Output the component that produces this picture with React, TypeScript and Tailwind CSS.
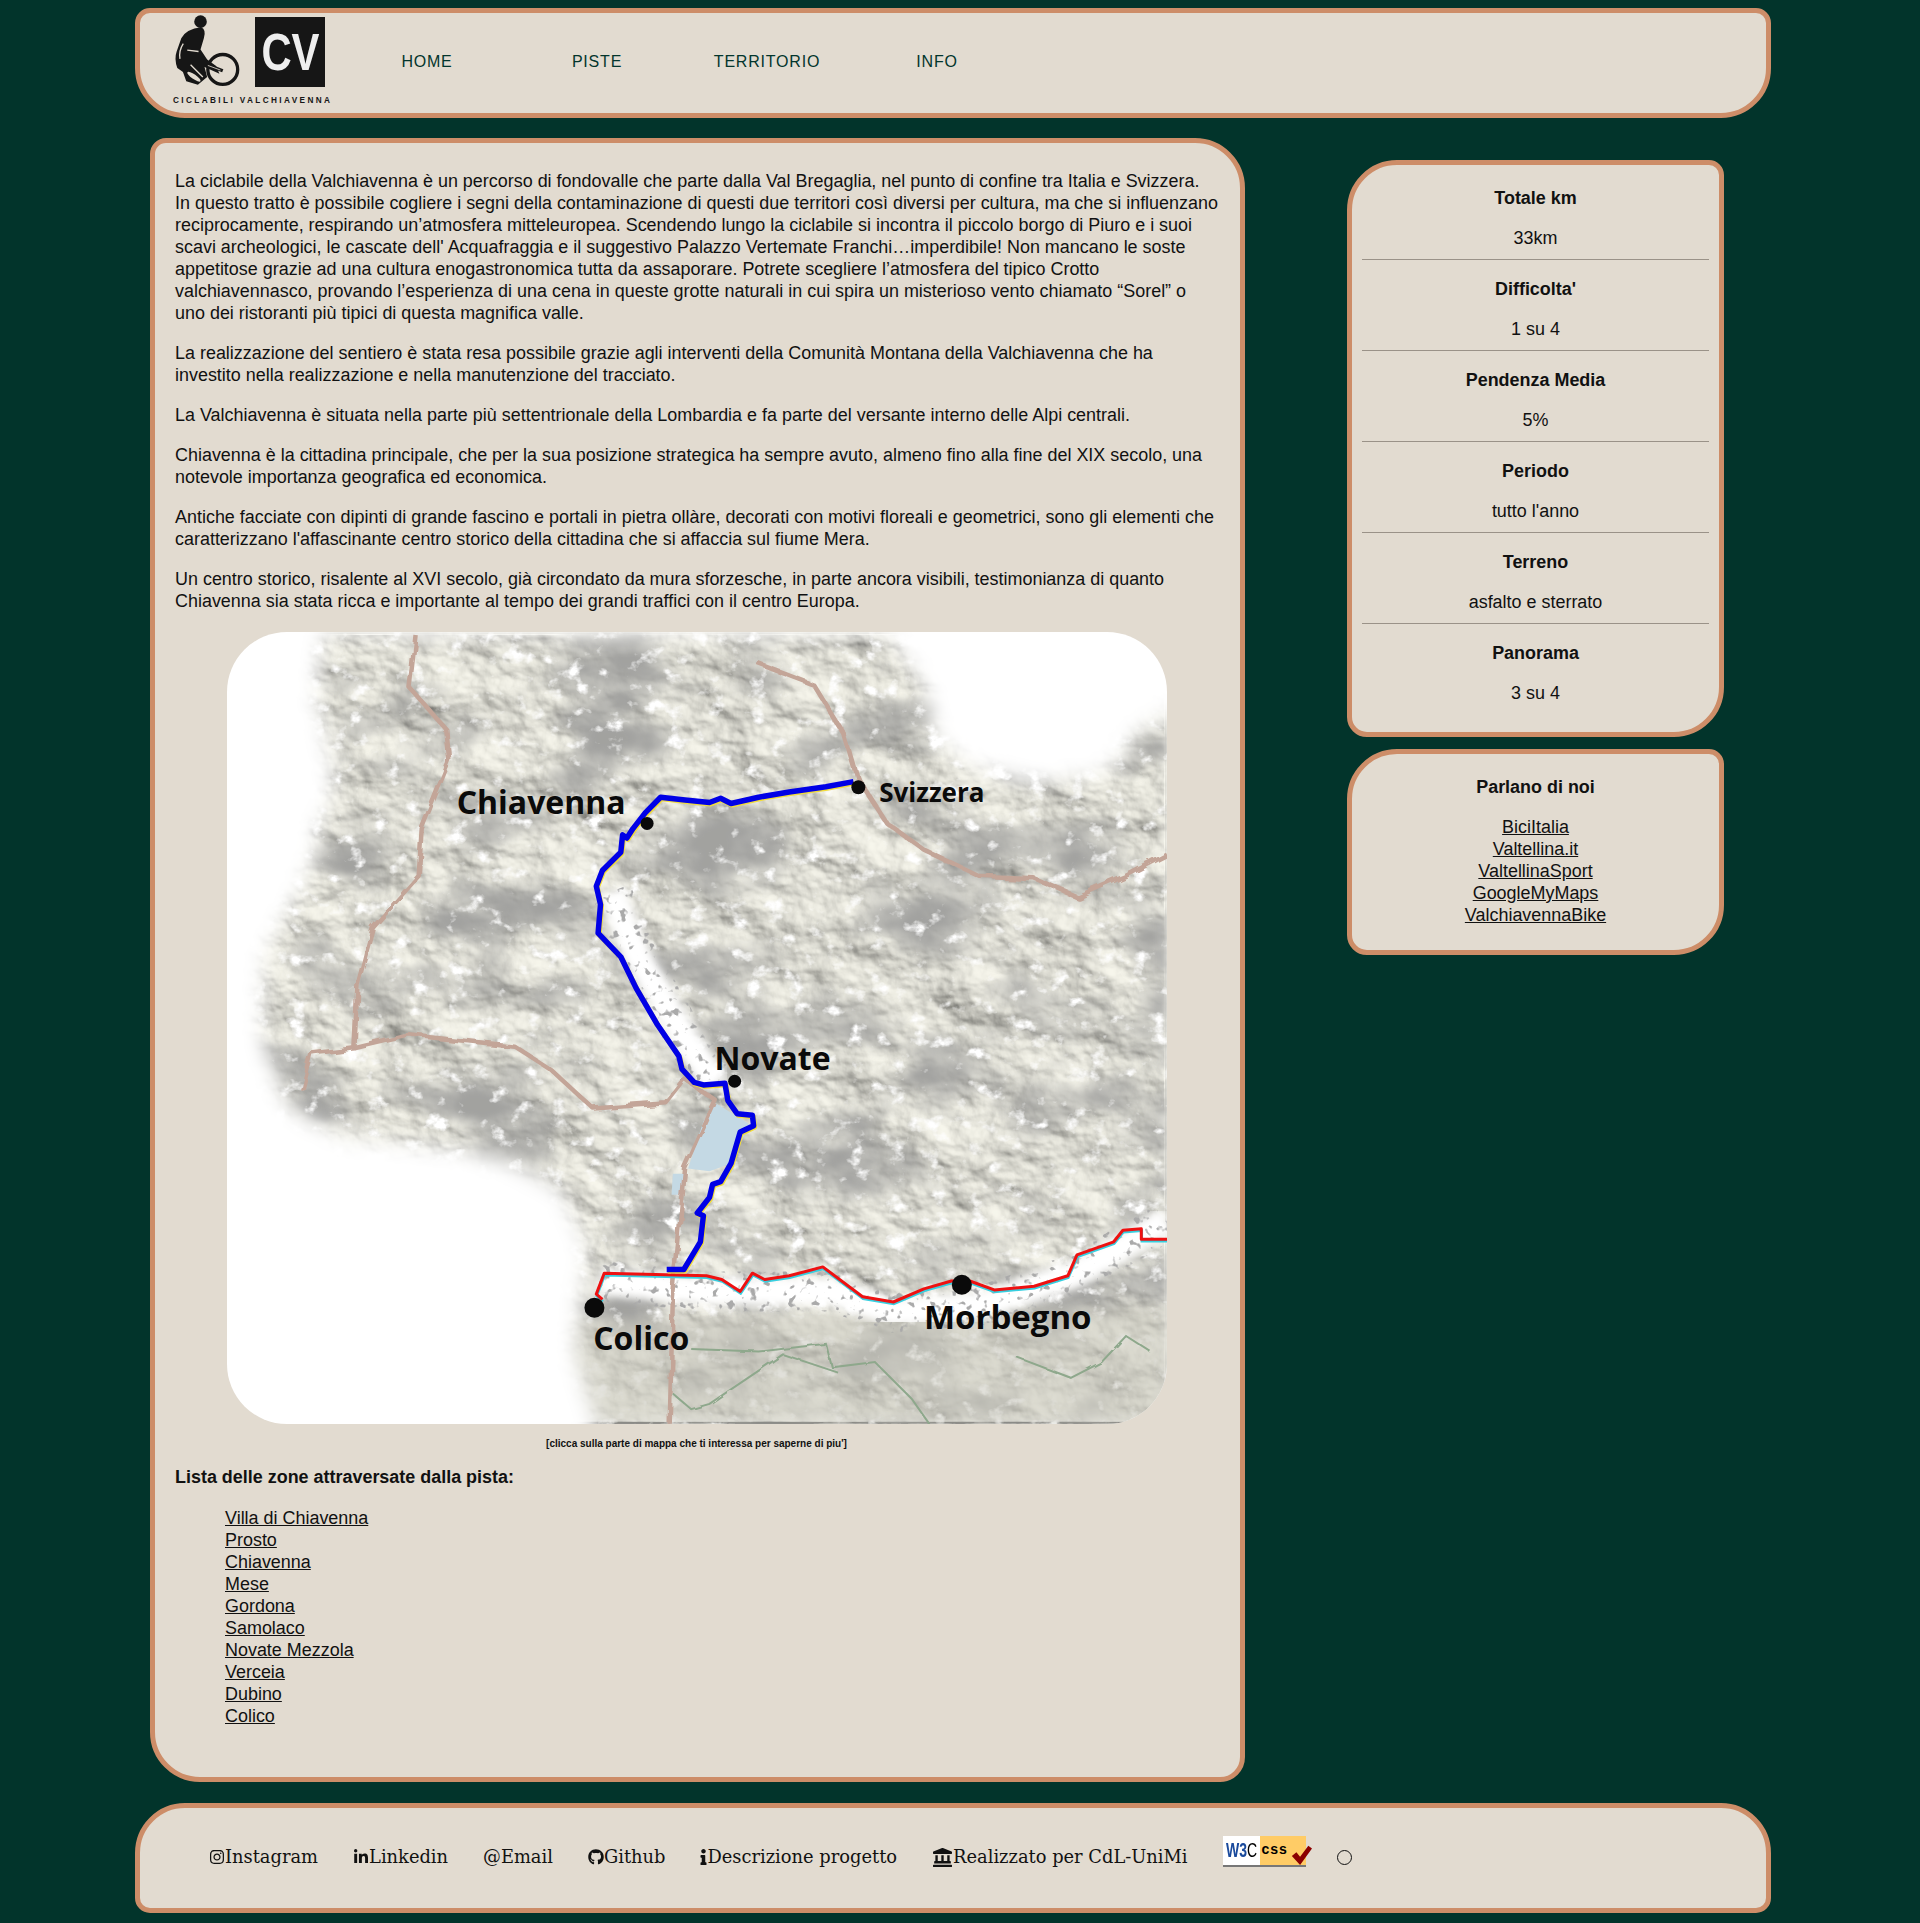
import type { ComponentProps } from "react";
import {
  FaGithub,
  FaInfo,
  FaInstagram,
  FaLandmark,
  FaLinkedinIn,
} from "react-icons/fa";

const sans = "font-['Liberation_Sans',Arial,sans-serif]";

const NAV = ["HOME", "PISTE", "TERRITORIO", "INFO"];

const ZONES = [
  "Villa di Chiavenna",
  "Prosto",
  "Chiavenna",
  "Mese",
  "Gordona",
  "Samolaco",
  "Novate Mezzola",
  "Verceia",
  "Dubino",
  "Colico",
];

const FACTS = [
  ["Totale km", "33km"],
  ["Difficolta'", "1 su 4"],
  ["Pendenza Media", "5%"],
  ["Periodo", "tutto l'anno"],
  ["Terreno", "asfalto e sterrato"],
  ["Panorama", "3 su 4"],
];

const PRESS = ["BiciItalia", "Valtellina.it", "ValtellinaSport", "GoogleMyMaps", "ValchiavennaBike"];

// the map points were read off a zoomed crop, this brings them back to pixels
const px = (x: number) => (x - 12) / 1.633;
const py = (y: number) => (y - 25) / 1.912;
const line = (pts: number[][]) => pts.map(([x, y]) => `${px(x).toFixed(1)},${py(y).toFixed(1)}`).join(" ");

const TERRAIN = [
  [170, 30], [1090, 30], [1150, 130], [1170, 230], [1230, 285], [1330, 315], [1450, 295], [1500, 215], [1560, 170],
  [1560, 1550], [620, 1550], [580, 1400], [600, 1200], [560, 1090], [480, 1040], [380, 1010], [200, 990], [110, 930],
  [70, 800], [75, 640], [140, 500], [190, 300], [160, 150],
];

const VALLEY = [
  [[640, 520], [680, 640], [760, 800], [810, 890]],
  [[620, 1265], [800, 1285], [1000, 1285], [1100, 1325], [1250, 1310], [1400, 1250], [1547, 1150]],
];

const ROADS = [
  [[320, 30], [310, 130], [370, 210], [375, 270], [330, 400], [325, 490], [250, 590], [225, 700], [220, 820], [150, 830], [135, 900]],
  [[220, 820], [310, 795], [480, 815], [540, 860], [610, 935], [730, 925], [760, 880], [810, 920], [760, 1050], [740, 1300], [735, 1538]],
  [[880, 85], [970, 125], [1020, 220], [1040, 300], [1090, 390], [1150, 440], [1240, 490], [1330, 495], [1400, 530], [1480, 490], [1547, 450]],
];

const CONTOURS = [
  [[770, 1395], [880, 1400], [990, 1385], [1000, 1430], [1070, 1420], [1130, 1490], [1160, 1540]],
  [[1010, 1440], [920, 1405], [800, 1500], [770, 1510], [740, 1480]],
  [[1300, 1410], [1390, 1450], [1440, 1420], [1480, 1370], [1520, 1400]],
];

const BLUE = [
  [1035, 310], [990, 320], [930, 330], [880, 340], [835, 352], [818, 342], [800, 350], [760, 345], [720, 340], [695, 370],
  [675, 400], [665, 418], [658, 412], [655, 445], [625, 480], [615, 510], [622, 545], [618, 600], [655, 645], [680, 705],
  [715, 775], [750, 835], [755, 860], [775, 885], [790, 890], [825, 887], [830, 920], [845, 945], [870, 948], [872, 968],
  [850, 980], [835, 1040], [818, 1075], [805, 1080], [800, 1105], [780, 1135], [790, 1140], [785, 1190], [758, 1243], [730, 1243],
];

const RED = [
  [625, 1300], [615, 1290], [628, 1250], [795, 1255], [820, 1262], [850, 1285], [870, 1250], [890, 1262], [930, 1255],
  [985, 1238], [1050, 1295], [1100, 1305], [1150, 1280], [1195, 1265], [1225, 1265], [1265, 1282], [1330, 1275],
  [1385, 1255], [1400, 1215], [1460, 1190], [1475, 1168], [1505, 1165], [1505, 1185], [1547, 1185],
];

const CITIES: [string, number, number, number][] = [
  ["Chiavenna", 387, 372, 32],
  ["Svizzera", 1077, 350, 26],
  ["Novate", 808, 862, 32],
  ["Colico", 610, 1396, 32],
  ["Morbegno", 1150, 1356, 33],
];

const DOTS = [
  [1043, 321, 7],
  [698, 390, 6.5],
  [841, 883, 6.5],
  [612, 1316, 10],
  [1212, 1272, 10],
];

const Panel = ({ className, ...props }: ComponentProps<"div">) => {
  return <div className={`border-[5px] border-[#cd8d68] bg-[#e2dbd0] ${className}`} {...props} />;
};

const Cyclist = () => {
  return (
    <svg viewBox="75 15 205 220" className="h-[73px] w-[68px] shrink-0">
      <circle cx="158" cy="38" r="19" fill="#161616" />
      <path
        d="M100 88 Q115 60 160 55 Q176 62 168 88 L158 122 L178 152 L205 172 L215 195 L170 175 L178 205 L150 228 L115 218 L105 190 L88 178 Q78 150 86 128 Z"
        fill="#161616"
      />
      <path d="M106 104 Q92 125 96 150 M118 124 L152 128 M128 168 L165 205" stroke="#e2dbd0" strokeWidth="4" fill="none" />
      <circle cx="225" cy="182" r="45" fill="none" stroke="#161616" strokeWidth="10" />
      <path d="M178 168 L225 186" stroke="#161616" strokeWidth="10" />
      <path d="M180 170 L218 184" stroke="#e2dbd0" strokeWidth="2.5" />
      <ellipse cx="138" cy="204" rx="24" ry="7" transform="rotate(35 138 204)" fill="#e2dbd0" />
    </svg>
  );
};

const Logo = () => {
  return (
    <div className="ml-[33px] mt-[1px] w-[169px] shrink-0">
      <div className="flex items-start">
        <Cyclist />
        <div className="ml-[14px] mt-[3px] flex h-[70px] w-[70px] items-center justify-center overflow-hidden bg-[#161616] text-[51px] leading-none font-bold text-[#eeeeee]">
          <span className="scale-x-[0.82]">CV</span>
        </div>
      </div>
      <div className="mt-[9px] text-[8.2px] leading-[10px] font-bold tracking-[2.4px] whitespace-nowrap text-[#161616]">
        CICLABILI VALCHIAVENNA
      </div>
    </div>
  );
};

const Header = () => {
  return (
    <Panel className="flex h-[110px] rounded-[15px_15px_50px_50px]">
      <Logo />
      <nav className="mt-[39px] flex">
        {NAV.map((item) => (
          <a key={item} className="block w-[170px] text-center text-[16px] leading-[20px] tracking-[0.8px] text-[#02352c]">
            {item}
          </a>
        ))}
      </nav>
    </Panel>
  );
};

const ValchiavennaMap = () => {
  return (
    <svg viewBox="0 0 940 791" className="ml-[52px] block h-[792px] w-[940px] rounded-[60px] bg-white">
      <defs>
        <filter id="relief" x="0" y="0" width="100%" height="100%">
          <feTurbulence type="fractalNoise" baseFrequency="0.012 0.018" numOctaves="6" seed="11" result="noise" />
          <feGaussianBlur in="noise" stdDeviation="1" result="smooth" />
          <feDiffuseLighting in="smooth" surfaceScale="13" diffuseConstant="1.08" lightingColor="#efeee4">
            <feDistantLight azimuth="315" elevation="52" />
          </feDiffuseLighting>
        </filter>
        <filter id="dark" x="0" y="0" width="100%" height="100%">
          <feTurbulence type="fractalNoise" baseFrequency="0.009 0.016" numOctaves="5" seed="4" />
          <feColorMatrix values="0 0 0 0 0.36  0 0 0 0 0.36  0 0 0 0 0.35  3.2 0 0 0 -1.5" />
          <feGaussianBlur stdDeviation="2.5" />
        </filter>
        <filter id="light" x="0" y="0" width="100%" height="100%">
          <feTurbulence type="fractalNoise" baseFrequency="0.05 0.06" numOctaves="4" seed="19" />
          <feColorMatrix values="0 0 0 0 1  0 0 0 0 1  0 0 0 0 1  5 0 0 0 -3" />
          <feGaussianBlur stdDeviation="0.6" />
        </filter>
        <filter id="specks" x="0" y="0" width="100%" height="100%">
          <feTurbulence type="fractalNoise" baseFrequency="0.13" numOctaves="2" seed="7" />
          <feColorMatrix values="0 0 0 0 0.4  0 0 0 0 0.4  0 0 0 0 0.4  9 0 0 0 -5.4" />
        </filter>
        <filter id="wiggle" x="-5%" y="-5%" width="110%" height="110%">
          <feTurbulence type="fractalNoise" baseFrequency="0.05" numOctaves="2" seed="3" />
          <feDisplacementMap in="SourceGraphic" scale="9" />
        </filter>
        <filter id="jitter" x="-5%" y="-5%" width="110%" height="110%">
          <feTurbulence type="fractalNoise" baseFrequency="0.09" numOctaves="1" seed="8" />
          <feDisplacementMap in="SourceGraphic" scale="4" />
        </filter>
        <filter id="soft">
          <feGaussianBlur stdDeviation="10" />
        </filter>
        <filter id="softer">
          <feGaussianBlur stdDeviation="4" />
        </filter>
        <mask id="land">
          <polygon points={line(TERRAIN)} fill="white" filter="url(#soft)" />
        </mask>
        <mask id="towns">
          {VALLEY.map((v, i) => (
            <polyline key={i} points={line(v)} fill="none" stroke="white" strokeWidth="40" />
          ))}
        </mask>
      </defs>
      <g mask="url(#land)">
        <rect width="940" height="791" filter="url(#relief)" />
        <rect width="940" height="791" filter="url(#dark)" />
        <rect width="940" height="791" filter="url(#light)" />
        <polygon points={line([[560, 1340], [1560, 1310], [1560, 1550], [560, 1550]])} fill="#c9c8bd" opacity="0.55" filter="url(#softer)" />
        {VALLEY.map((v, i) => (
          <polyline key={i} points={line(v)} fill="none" stroke="white" strokeWidth="28" filter="url(#softer)" />
        ))}
        <rect width="940" height="791" filter="url(#specks)" mask="url(#towns)" />
        <polygon points={line([[810, 925], [865, 965], [835, 1040], [800, 1055], [765, 1050], [790, 960]])} fill="#c4d9e4" />
        <polygon points={line([[740, 1060], [765, 1060], [755, 1100], [738, 1100]])} fill="#c4d9e4" />
      </g>
      {CONTOURS.map((c, i) => (
        <polyline key={i} points={line(c)} fill="none" stroke="#8ea88c" strokeWidth="2" filter="url(#jitter)" />
      ))}
      {ROADS.map((road, i) => (
        <polyline key={i} points={line(road)} fill="none" stroke="#c3a598" strokeWidth="4.5" strokeLinejoin="round" filter="url(#wiggle)" />
      ))}
      <polyline points={line(RED)} transform="translate(0.5 2)" fill="none" stroke="#37cfe0" strokeWidth="2.5" />
      <polyline points={line(RED)} fill="none" stroke="#ee1111" strokeWidth="3" strokeLinejoin="round" />
      <polyline points={line(BLUE)} transform="translate(1 1.5)" fill="none" stroke="#f2dc3a" strokeWidth="5" strokeLinejoin="round" />
      <polyline points={line(BLUE)} fill="none" stroke="#0000e6" strokeWidth="5.5" strokeLinejoin="round" />
      {DOTS.map(([x, y, r]) => (
        <circle key={x} cx={px(x)} cy={py(y)} r={r} fill="#0a0a0a" />
      ))}
      {CITIES.map(([name, x, y, size]) => (
        <text key={name} x={px(x)} y={py(y)} className="font-['Open_Sans',sans-serif]" fontSize={size} fontWeight="700" fill="#0a0a0a">
          {name}
        </text>
      ))}
    </svg>
  );
};

const Article = () => {
  return (
    <Panel className="h-[1644px] w-[1095px] shrink-0 rounded-[16px_50px_25px_50px] px-[20px] pt-[27px]">
      <div className="mr-[-8px] flex flex-col gap-[18px]">
        <p>
          La ciclabile della Valchiavenna è un percorso di fondovalle che parte dalla Val Bregaglia, nel punto di confine tra Italia e Svizzera.
          <br />
          In questo tratto è possibile cogliere i segni della contaminazione di questi due territori così diversi per cultura, ma che si influenzano
          <br />
          reciprocamente, respirando un’atmosfera mitteleuropea. Scendendo lungo la ciclabile si incontra il piccolo borgo di Piuro e i suoi
          <br />
          scavi archeologici, le cascate dell' Acquafraggia e il suggestivo Palazzo Vertemate Franchi…imperdibile! Non mancano le soste
          <br />
          appetitose grazie ad una cultura enogastronomica tutta da assaporare. Potrete scegliere l’atmosfera del tipico Crotto
          <br />
          valchiavennasco, provando l’esperienza di una cena in queste grotte naturali in cui spira un misterioso vento chiamato “Sorel” o
          <br />
          uno dei ristoranti più tipici di questa magnifica valle.
        </p>
        <p>
          La realizzazione del sentiero è stata resa possibile grazie agli interventi della Comunità Montana della Valchiavenna che ha
          <br />
          investito nella realizzazione e nella manutenzione del tracciato.
        </p>
        <p>La Valchiavenna è situata nella parte più settentrionale della Lombardia e fa parte del versante interno delle Alpi centrali.</p>
        <p>
          Chiavenna è la cittadina principale, che per la sua posizione strategica ha sempre avuto, almeno fino alla fine del XIX secolo, una
          <br />
          notevole importanza geografica ed economica.
        </p>
        <p>
          Antiche facciate con dipinti di grande fascino e portali in pietra ollàre, decorati con motivi floreali e geometrici, sono gli elementi che
          <br />
          caratterizzano l'affascinante centro storico della cittadina che si affaccia sul fiume Mera.
        </p>
        <p>
          Un centro storico, risalente al XVI secolo, già circondato da mura sforzesche, in parte ancora visibili, testimonianza di quanto
          <br />
          Chiavenna sia stata ricca e importante al tempo dei grandi traffici con il centro Europa.
        </p>
      </div>
      <div className="mt-[20px]">
        <ValchiavennaMap />
      </div>
      <p className="mt-[13px] pr-[2px] text-center text-[10px] leading-[14px] font-bold">
        [clicca sulla parte di mappa che ti interessa per saperne di piu']
      </p>
      <p className="mt-[15px] font-bold">Lista delle zone attraversate dalla pista:</p>
      <ul className="mt-[19px] pl-[50px]">
        {ZONES.map((zone) => (
          <li key={zone}>
            <a className="underline">{zone}</a>
          </li>
        ))}
      </ul>
    </Panel>
  );
};

const Sidebar = () => {
  return (
    <aside className="mt-[22px] ml-[102px] w-[377px] shrink-0 text-center">
      <Panel className="h-[577px] rounded-[50px_15px_50px_20px] px-[10px] pt-[22px]">
        {FACTS.map(([title, value], i) => (
          <div key={title} className={i < FACTS.length - 1 ? "mb-[18px] border-b border-[#9a9288] pb-[10px]" : ""}>
            <p className="font-bold">{title}</p>
            <p className="mt-[18px]">{value}</p>
          </div>
        ))}
      </Panel>
      <Panel className="mt-[12px] h-[206px] rounded-[50px_15px_50px_20px] px-[10px] pt-[22px]">
        <p className="font-bold">Parlano di noi</p>
        <div className="mt-[18px] flex flex-col items-center">
          {PRESS.map((link) => (
            <a key={link} className="underline">
              {link}
            </a>
          ))}
        </div>
      </Panel>
    </aside>
  );
};

const FooterLink = ({ children, icon }: ComponentProps<"a"> & { icon?: React.ReactNode }) => {
  return (
    <a className="flex items-center whitespace-nowrap">
      {icon}
      {children}
    </a>
  );
};

const CssBadge = () => {
  return (
    <div className={`relative mt-[-11px] flex h-[31px] w-[83px] border-b-2 border-[#777] ${sans}`}>
      <div className="w-[37px] overflow-hidden bg-white pt-[4px] pl-[3px] text-[20px] leading-[20px] font-bold whitespace-nowrap text-[#1a4a9c]">
        <span className="inline-block origin-left scale-x-[0.7]">
          W3<span className="font-normal text-black">C</span>
        </span>
      </div>
      <div className="flex-1 bg-[#ffcc66] pl-[2px] text-[14px] leading-[26px] font-bold tracking-[1px] text-black">css</div>
      <svg viewBox="0 0 24 24" className="absolute top-[8px] right-[-6px] h-[22px] w-[22px]">
        <path d="M2 13 L7 9 L11 14 L20 2 L24 5 L11 23 Z" fill="#8b0000" />
      </svg>
    </div>
  );
};

const Footer = () => {
  return (
    <Panel className="mt-[21px] flex h-[110px] items-center gap-[35px] rounded-[50px_50px_15px_15px] pb-[2px] pl-[69px] font-['DejaVu_Serif',serif] text-[17.85px] leading-[22px]">
      <FooterLink icon={<FaInstagram className="h-[16px] w-[16px]" />}>Instagram</FooterLink>
      <FooterLink icon={<FaLinkedinIn className="h-[16px] w-[16px]" />}>Linkedin</FooterLink>
      <FooterLink>@Email</FooterLink>
      <FooterLink icon={<FaGithub className="h-[16px] w-[16px]" />}>Github</FooterLink>
      <FooterLink icon={<FaInfo className="h-[16px] w-[7px]" />}>Descrizione progetto</FooterLink>
      <FooterLink icon={<FaLandmark className="h-[19px] w-[21px]" />}>Realizzato per CdL-UniMi</FooterLink>
      <CssBadge />
      <span className="ml-[-4px] h-[15px] w-[15px] rounded-full border border-[#111]" />
    </Panel>
  );
};

export default function App() {
  return (
    <div className={`min-h-[1923px] bg-[#02342b] pt-[8px] text-[17.96px] leading-[22px] text-[#111] ${sans}`}>
      <div className="ml-[135px] w-[1636px]">
        <Header />
        <div className="mt-[20px] ml-[15px] flex items-start">
          <Article />
          <Sidebar />
        </div>
        <Footer />
      </div>
    </div>
  );
}
